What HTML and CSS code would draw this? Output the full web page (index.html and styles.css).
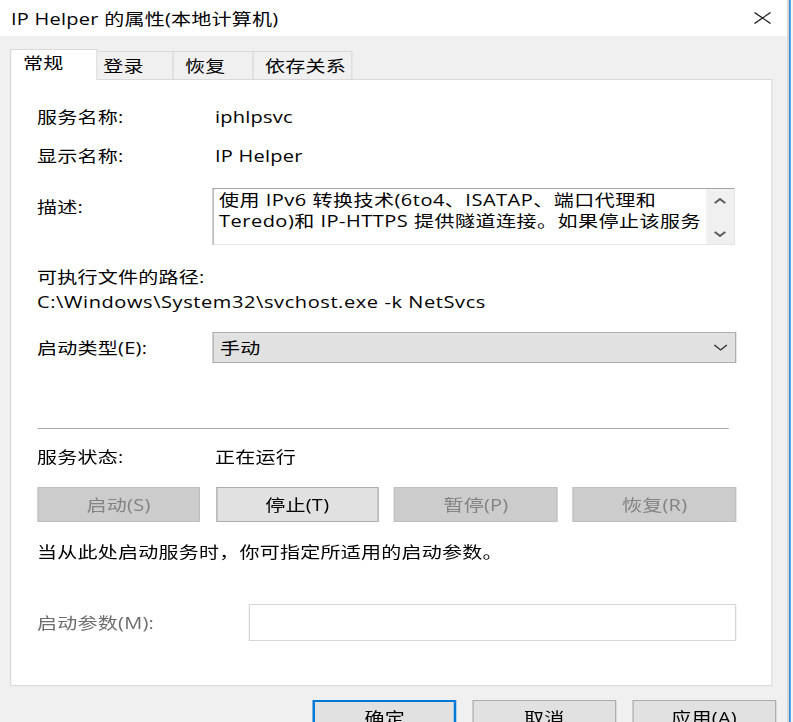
FILE: index.html
```html
<!DOCTYPE html>
<html lang="zh-CN">
<head>
<meta charset="utf-8">
<title>IP Helper 的属性(本地计算机)</title>
<link rel="stylesheet" href="styles.css">
</head>
<body>
<div class="screen">
  <div class="dialog">
    <div class="titlebar">
      <span class="title">IP Helper 的属性(本地计算机)</span>
      <svg class="close" width="14" height="12" viewBox="0 0 14 12"><path d="M0.6 0.5 L13.4 11.5 M13.4 0.5 L0.6 11.5" stroke="#1a1a1a" stroke-width="1.05" fill="none"/></svg>
    </div>
    <div class="body">
      <div class="tabs">
        <div class="tab tab-active tab-general">常规</div>
        <div class="tab tab-logon">登录</div>
        <div class="tab tab-recovery">恢复</div>
        <div class="tab tab-deps">依存关系</div>
      </div>
      <div class="panel">
        <div class="row row-name"><span class="label">服务名称:</span><span class="value">iphlpsvc</span></div>
        <div class="row row-display"><span class="label">显示名称:</span><span class="value">IP Helper</span></div>
        <div class="row row-desc">
          <span class="label label-desc">描述:</span>
          <div class="desc">
            <div class="desc-text">
              <div class="desc-line">使用 IPv6 转换技术(6to4、ISATAP、端口代理和</div>
              <div class="desc-line">Teredo)和 IP-HTTPS 提供隧道连接。如果停止该服务</div>
            </div>
            <div class="scrollbar">
              <svg width="10" height="6" viewBox="0 0 10 6"><path d="M0.8 5.2 L5 1 L9.2 5.2" stroke="#5f5f5f" stroke-width="1.8" fill="none"/></svg>
              <svg width="10" height="6" viewBox="0 0 10 6"><path d="M0.8 0.8 L5 5 L9.2 0.8" stroke="#5f5f5f" stroke-width="1.8" fill="none"/></svg>
            </div>
          </div>
        </div>
        <div class="path-label">可执行文件的路径:</div>
        <div class="path">C:\Windows\System32\svchost.exe -k NetSvcs</div>
        <div class="row row-startup">
          <span class="label">启动类型(E):</span>
          <div class="combo"><span class="combo-text">手动</span><svg width="11" height="7" viewBox="0 0 11 7"><path d="M0.5 1 L5.5 6 L10.5 1" stroke="#333" stroke-width="1.1" fill="none"/></svg></div>
        </div>
        <div class="sep"></div>
        <div class="row row-status"><span class="label">服务状态:</span><span class="value">正在运行</span></div>
        <div class="actions">
          <div class="btn btn-disabled">启动(S)</div>
          <div class="btn">停止(T)</div>
          <div class="btn btn-disabled">暂停(P)</div>
          <div class="btn btn-disabled">恢复(R)</div>
        </div>
        <div class="hint">当从此处启动服务时，你可指定所适用的启动参数。</div>
        <div class="row row-params">
          <span class="label label-params">启动参数(M):</span>
          <div class="input"></div>
        </div>
      </div>
      <div class="footer">
        <div class="fbtn fbtn-default">确定</div>
        <div class="fbtn">取消</div>
        <div class="fbtn">应用(A)</div>
      </div>
    </div>
  </div>
  <div class="backdrop"></div>
</div>
</body>
</html>
```
FILE: styles.css
```css
html, body {
  margin: 0;
  padding: 0;
  overflow: hidden;
  background: #f0f0f0;
}

.screen {
  width: 634.4px;
  height: 722px;
  overflow: hidden;
  display: flex;
  transform: scaleX(1.25);
  transform-origin: 0 0;
  font-family: "Open Sans", "Noto Sans CJK SC", sans-serif;
  font-size: 16px;
  line-height: 20px;
  color: #000;
  letter-spacing: 0.2px;
}

.dialog {
  width: 629.6px;
  flex: none;
  background: #f0f0f0;
  display: flex;
  flex-direction: column;
}

.backdrop {
  flex: 1;
  background: #f4f4f4;
  border-left: 1px solid #c6c6c6;
  box-shadow: inset 1.6px 0 0 #3a8ee0;
}

.titlebar {
  height: 36px;
  flex: none;
  background: #fff;
  display: flex;
  align-items: center;
  justify-content: space-between;
  padding: 0 12.8px 0 8.8px;
}

.title {
  padding-top: 1px;
}

.close {
  display: block;
}

.body {
  flex: 1;
  padding: 13px 0 0 8px;
}

.tabs {
  display: flex;
  align-items: flex-start;
  height: 31px;
}

.tab {
  box-sizing: border-box;
  height: 28px;
  margin-top: 2px;
  margin-left: -1px;
  border: 1px solid #d9d9d9;
  border-bottom: none;
  background: #f0f0f0;
  padding-top: 3.5px;
  white-space: nowrap;
}

.tab-active {
  position: relative;
  z-index: 1;
  height: 31px;
  margin-top: 0;
  margin-left: 0;
  background: #fff;
  padding-top: 2.5px;
}

.tab-general { width: 69.6px; padding-left: 9.4px; }
.tab-logon { width: 62.6px; padding-left: 5px; }
.tab-recovery { width: 65px; padding-left: 8.8px; }
.tab-deps { width: 79.4px; padding-left: 8.8px; }

.panel {
  box-sizing: border-box;
  width: 609.6px;
  margin-top: -1px;
  background: #fff;
  border: 1px solid #d9d9d9;
  padding: 27px 27.6px 44px 20.6px;
  display: flex;
  flex-direction: column;
}

.row {
  display: flex;
  align-items: center;
}

.label {
  width: 140.8px;
  flex: none;
  white-space: nowrap;
}

.value {
  padding-left: 1.6px;
  white-space: nowrap;
}

.row-display { margin-top: 19px; }

.row-desc {
  margin-top: 22px;
  align-items: flex-start;
}

.label-desc { margin-top: 9px; }

.desc {
  box-sizing: border-box;
  width: 417.6px;
  height: 57px;
  display: flex;
  border: 1px solid #e3e3e3;
  border-top-color: #a5a5a5;
  border-left-color: #a5a5a5;
  background: #fff;
}

.desc-text {
  flex: 1;
  min-width: 0;
  overflow: hidden;
  padding: 1px 0 0 3.8px;
  line-height: 21px;
}

.desc-line {
  white-space: nowrap;
  letter-spacing: 0.4px;
}

.scrollbar {
  width: 21.6px;
  flex: none;
  background: #f0f0f0;
  display: flex;
  flex-direction: column;
  align-items: center;
  justify-content: space-between;
  padding: 9px 0 7px;
  box-sizing: border-box;
}

.scrollbar svg { display: block; }

.path-label { margin-top: 22px; white-space: nowrap; }

.path {
  margin-top: 5px;
  white-space: nowrap;
  letter-spacing: 0.47px;
}

.row-startup { margin-top: 20px; }

.combo {
  box-sizing: border-box;
  flex: 1;
  height: 31px;
  background: #e1e1e1;
  border: 1px solid #adadad;
  display: flex;
  align-items: center;
  justify-content: space-between;
  padding: 0 5.8px 0 4.6px;
}

.combo svg { display: block; }

.sep {
  margin-top: 65px;
  width: 553.6px;
  height: 1px;
  background: #a9a9a9;
}

.row-status { margin-top: 18px; }

.actions {
  margin-top: 20px;
  display: grid;
  grid-template-columns: repeat(4, 1fr);
  column-gap: 12.4px;
}

.btn {
  box-sizing: border-box;
  height: 35px;
  background: #e1e1e1;
  border: 1px solid #adadad;
  display: flex;
  align-items: center;
  justify-content: center;
  white-space: nowrap;
}

.btn-disabled {
  background: #cccccc;
  border-color: #bfbfbf;
  color: #838383;
}

.hint {
  margin-top: 20px;
  white-space: nowrap;
}

.row-params { margin-top: 42px; }

.label-params {
  width: 169.6px;
  color: #6d6d6d;
}

.input {
  box-sizing: border-box;
  flex: 1;
  height: 37px;
  background: #fff;
  border: 1px solid #d7d7d7;
}

.footer {
  margin-top: 14px;
  display: flex;
  justify-content: flex-end;
  column-gap: 12.8px;
  padding-right: 8.8px;
}

.fbtn {
  box-sizing: border-box;
  width: 115px;
  height: 35px;
  background: #e1e1e1;
  border: 1px solid #adadad;
  display: flex;
  align-items: center;
  justify-content: center;
  white-space: nowrap;
}

.fbtn-default {
  border: 2px solid #0078d7;
}
```
